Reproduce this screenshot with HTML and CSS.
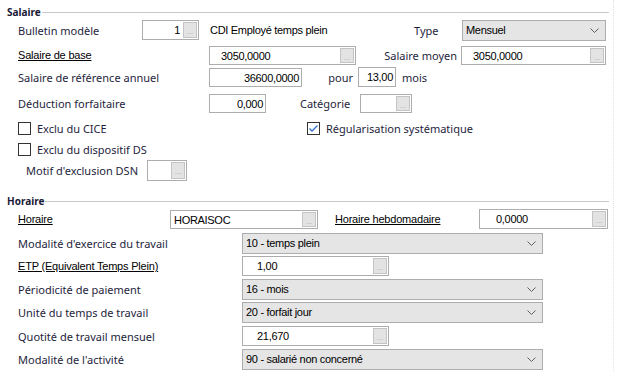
FILE: index.html
```html
<!DOCTYPE html>
<html lang="fr">
<head>
    <meta charset="UTF-8">
    <title>Salaire / Horaire</title>
    <link rel="stylesheet" href="styles.css">
</head>
<body>
<div class="panel">

    <!-- Bloc salaire -->
    <div class="group-title"><span>Salaire</span></div>

    <div class="row">
        <span class="lbl lbl-bulletin">Bulletin modèle</span>
        <span class="field right f-bulletin"><span class="val">1</span><span class="btn">...</span></span>
        <span class="plain cdi">CDI Employé temps plein</span>
        <span class="lbl lbl-type">Type</span>
        <span class="combo c-type"><span class="val">Mensuel</span><svg class="chev" width="9" height="5" viewBox="0 0 9 5"><polyline points="0.5,0.5 4.5,4.5 8.5,0.5"/></svg></span>
    </div>

    <div class="row gap3">
        <span class="lbl link lbl-col1">Salaire de base</span>
        <span class="field f-base"><span class="val pad-l">3050,0000</span><span class="btn">...</span></span>
        <span class="lbl lbl-moyen">Salaire moyen</span>
        <span class="field f-moyen"><span class="val pad-l">3050,0000</span><span class="btn">...</span></span>
    </div>

    <div class="row">
        <span class="lbl lbl-col1">Salaire de référence annuel</span>
        <span class="field right f-annuel"><span class="val">36600,0000</span></span>
        <span class="lbl lbl-pour">pour</span>
        <span class="field right f-pour"><span class="val">13,00</span></span>
        <span class="lbl lbl-mois">mois</span>
    </div>

    <div class="row gap4">
        <span class="lbl lbl-col1">Déduction forfaitaire</span>
        <span class="field right f-deduc"><span class="val">0,000</span></span>
        <span class="lbl lbl-cat">Catégorie</span>
        <span class="field f-cat"><span class="val"></span><span class="btn">...</span></span>
    </div>

    <div class="row row-check gap4">
        <span class="check-item first"><span class="check"></span>Exclu du CICE</span>
        <span class="check-item"><span class="check on"><svg width="11" height="11" viewBox="0 0 11 11"><polyline points="1.5,5.5 4,8 9.5,2.5"/></svg></span>Régularisation systématique</span>
    </div>

    <div class="row row-check gap1">
        <span class="check-item"><span class="check"></span>Exclu du dispositif DS</span>
    </div>

    <div class="row">
        <span class="lbl lbl-motif">Motif d'exclusion DSN</span>
        <span class="field f-motif"><span class="val"></span><span class="btn">...</span></span>
    </div>

    <!-- Bloc horaire -->
    <div class="group-title gap13"><span>Horaire</span></div>

    <div class="row">
        <span class="lbl link lbl-horaire">Horaire</span>
        <span class="field f-horaire"><span class="val">HORAISOC</span><span class="btn">...</span></span>
        <span class="lbl link lbl-hebdo">Horaire hebdomadaire</span>
        <span class="field f-hebdo"><span class="val pad-hebdo">0,0000</span><span class="btn">...</span></span>
    </div>

    <div class="row gap2">
        <span class="lbl lbl-col2">Modalité d'exercice du travail</span>
        <span class="combo c-wide"><span class="val">10 - temps plein</span><svg class="chev" width="9" height="5" viewBox="0 0 9 5"><polyline points="0.5,0.5 4.5,4.5 8.5,0.5"/></svg></span>
    </div>

    <div class="row gap1">
        <span class="lbl link lbl-col2">ETP (Equivalent Temps Plein)</span>
        <span class="field f-etp"><span class="val pad-num">1,00</span><span class="btn">...</span></span>
    </div>

    <div class="row gap1">
        <span class="lbl lbl-col2">Périodicité de paiement</span>
        <span class="combo c-wide"><span class="val">16 - mois</span><svg class="chev" width="9" height="5" viewBox="0 0 9 5"><polyline points="0.5,0.5 4.5,4.5 8.5,0.5"/></svg></span>
    </div>

    <div class="row gap1">
        <span class="lbl lbl-col2">Unité du temps de travail</span>
        <span class="combo c-wide"><span class="val">20 - forfait jour</span><svg class="chev" width="9" height="5" viewBox="0 0 9 5"><polyline points="0.5,0.5 4.5,4.5 8.5,0.5"/></svg></span>
    </div>

    <div class="row gap2">
        <span class="lbl lbl-col2">Quotité de travail mensuel</span>
        <span class="field f-etp"><span class="val pad-num">21,670</span><span class="btn">...</span></span>
    </div>

    <div class="row gap1">
        <span class="lbl lbl-col2">Modalité de l'activité</span>
        <span class="combo c-wide"><span class="val">90 - salarié non concerné</span><svg class="chev" width="9" height="5" viewBox="0 0 9 5"><polyline points="0.5,0.5 4.5,4.5 8.5,0.5"/></svg></span>
    </div>

</div>
</body>
</html>
```

FILE: styles.css
```css
/* Page de base */
body {
    margin: 0;
    background: #fff;
    font-family: "Noto Sans", sans-serif;
    font-size: 11px;
    color: #1e1e3c;
}

.panel {
    width: 614px;
    height: 372px;
    box-sizing: border-box;
    border-right: 1px dotted #e2e2e2;
    overflow: hidden;
}

/* Titres de groupe avec le trait */
.group-title {
    display: flex;
    align-items: center;
    height: 14px;
    margin-top: 5px;
    padding-left: 7px;
    padding-right: 4px;
    font-size: 10px;
    font-weight: bold;
    color: #1a1a36;
}
.group-title::after {
    content: "";
    flex: 1;
    height: 1px;
    margin-left: 1px;
    background: #c9c9c9;
}
.group-title.gap13 { margin-top: 13px; }

/* Lignes */
.row {
    display: flex;
    align-items: center;
    height: 22px;
    padding-left: 18px;
}
.row-check { height: 20px; }
.gap1 { margin-top: 1px; }
.gap2 { margin-top: 2px; }
.gap3 { margin-top: 3px; }
.gap4 { margin-top: 4px; }

.lbl { flex: none; white-space: nowrap; }
.link {
    font-family: "Liberation Sans", sans-serif;
    font-size: 11px;
    letter-spacing: -0.2px;
    color: #000;
    text-decoration: underline;
}
.plain {
    font-family: "Liberation Sans", sans-serif;
    font-size: 11px;
    letter-spacing: -0.3px;
    color: #000;
    white-space: nowrap;
}

/* Largeurs des libellés */
.lbl-bulletin { width: 124px; }
.lbl-col1 { width: 191px; }
.lbl-col2 { width: 224px; }
.lbl-horaire { width: 152px; }
.lbl-type { width: 48px; }
.lbl-moyen { width: 105px; text-align: right; padding-right: 4px; box-sizing: border-box; }
.lbl-pour { width: 56px; text-align: right; padding-right: 5px; box-sizing: border-box; }
.lbl-mois { margin-left: 6px; }
.lbl-cat { width: 60px; margin-left: 34px; }
.lbl-motif { width: 121px; margin-left: 8px; }
.lbl-hebdo { width: 144px; margin-left: 17px; }
.cdi { width: 204px; margin-left: 11px; }

/* Zones de saisie */
.field {
    flex: none;
    display: flex;
    height: 20px;
    box-sizing: border-box;
    border: 1px solid #adadad;
    background: #fff;
    font-family: "Liberation Sans", sans-serif;
    font-size: 11px;
    letter-spacing: -0.3px;
    color: #000;
}
.field .val {
    flex: 1;
    padding: 0 3px;
    line-height: 18px;
    white-space: nowrap;
    overflow: hidden;
}
.field.right .val { text-align: right; padding-right: 2px; }
.field .pad-l { padding-left: 11px; }
.field .pad-num { padding-left: 14px; }
.field .pad-hebdo { padding-left: 16px; }

.btn {
    flex: none;
    width: 14px;
    margin: 1px;
    box-sizing: border-box;
    border: 1px solid #c4c4c4;
    background: #e3e3e3;
    color: #a9a9a9;
    font-size: 8px;
    letter-spacing: 0;
    line-height: 18px;
    text-align: center;
}

.f-bulletin { width: 57px; }
.f-base { width: 147px; height: 19px; }
.f-moyen { width: 145px; height: 19px; }
.f-annuel { width: 93px; height: 19px; }
.f-pour { width: 38px; }
.f-deduc { width: 57px; height: 19px; }
.f-cat { width: 52px; height: 19px; }
.f-motif { width: 40px; height: 21px; }
.f-horaire { width: 148px; height: 19px; }
.f-hebdo { width: 129px; }
.f-etp { width: 147px; }

/* Listes déroulantes */
.combo {
    flex: none;
    display: flex;
    align-items: center;
    height: 21px;
    box-sizing: border-box;
    border: 1px solid #adadad;
    background: #e5e5e5;
    font-family: "Liberation Sans", sans-serif;
    font-size: 11px;
    letter-spacing: -0.3px;
    color: #000;
}
.combo .val { flex: 1; padding-left: 3px; white-space: nowrap; }
.chev { margin-right: 6px; }
.chev polyline { fill: none; stroke: #606060; stroke-width: 1; }
.c-type { width: 144px; }
.c-wide { width: 301px; }

/* Cases à cocher */
.check-item { display: flex; align-items: center; white-space: nowrap; }
.check-item.first { width: 289px; }
.check {
    width: 13px;
    height: 13px;
    box-sizing: border-box;
    border: 1px solid #333;
    background: #fff;
    margin-right: 6px;
    display: flex;
}
.check.on svg polyline { fill: none; stroke: #2c6fcf; stroke-width: 1.3; }
```
